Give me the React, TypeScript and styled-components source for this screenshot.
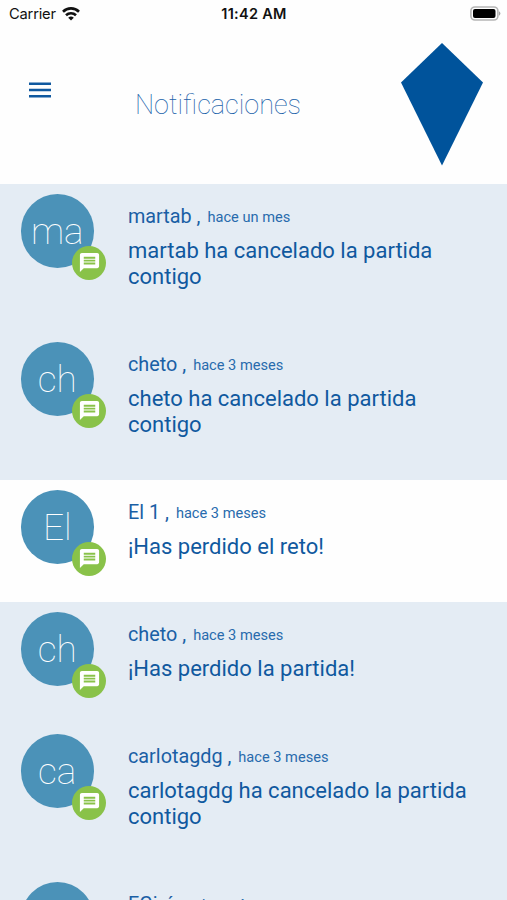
import React from 'react';
import styled, { createGlobalStyle } from 'styled-components';

const GlobalStyle = createGlobalStyle`
  * { box-sizing: border-box; }
  html, body { margin: 0; height: 900px; overflow: hidden; background: #fff; }
`;

const Screen = styled.div`
  width: 507px;
  height: 900px;
  overflow: hidden;
  display: flex;
  flex-direction: column;
  background: #fefefe;
  color: #1a5fa5;
  font-family: Roboto, sans-serif;
`;

const StatusBar = styled.div`
  flex: none;
  height: 28px;
  padding: 0 6px 0 9px;
  display: grid;
  grid-template-columns: 1fr auto 1fr;
  align-items: center;
  color: #111;
  font: 15px/28px Inter, sans-serif;
`;

const Carrier = styled.div`
  display: flex;
  align-items: center;
  gap: 6px;
  font-size: 14.7px;
  letter-spacing: -0.2px;
`;

const Clock = styled.div`
  margin-left: -2px;
  font-size: 14.5px;
  font-weight: 600;
  letter-spacing: 0.3px;
`;

const BatteryIcon = styled.svg`
  justify-self: end;
  margin-top: -2px;
`;

const Header = styled.header`
  flex: none;
  height: 156px;
  padding: 15px 24px 0 29px;
  display: grid;
  grid-template-columns: 106px 1fr auto;
  align-items: start;
`;

const MenuButton = styled.button`
  width: 22px;
  height: 16px;
  margin-top: 39px;
  padding: 0;
  border: 0;
  background: none;
  display: flex;
`;

const Title = styled.h1`
  margin: 45px 0 0;
  font-size: 27px;
  line-height: 34px;
  font-weight: 100;
  color: #1a62aa;
`;

const List = styled.div`
  flex: none;
`;

const Row = styled.article<{ $unread: boolean; $tall: boolean }>`
  height: ${(p) => (p.$tall ? 148 : 122)}px;
  padding: 10px 20px 0 20.5px;
  display: flex;
  gap: 34px;
  background: ${(p) => (p.$unread ? '#e4ecf4' : '#fefefe')};
`;

const Avatar = styled.div`
  position: relative;
  flex: none;
  width: 73.5px;
  height: 73.5px;
  border-radius: 50%;
  background: #4b92b8;
  color: #fff;
  font-size: 37px;
  font-weight: 100;
  line-height: 76px;
  text-align: center;
`;

const Badge = styled.div`
  position: absolute;
  left: 51.5px;
  top: 51.5px;
  width: 34px;
  height: 34px;
  border-radius: 50%;
  background: #89c249;
  display: flex;
  align-items: center;
  justify-content: center;
`;

const Content = styled.div`
  flex: 1;
  padding-top: 10px;
`;

const Meta = styled.div`
  display: flex;
  align-items: center;
  gap: 7px;
  height: 26px;
  font-size: 19.8px;
  line-height: 26px;
  white-space: pre;
`;

const Time = styled.time`
  font-size: 14.6px;
  line-height: 24px;
  color: #286bad;
`;

const Message = styled.p`
  margin: 8px 0 0;
  font-size: 22px;
  line-height: 26px;
  color: #10599f;
`;

const notifications = [
  { initials: 'ma', name: 'martab', time: 'hace un mes', message: 'martab ha cancelado la partida contigo', unread: true, tall: true },
  { initials: 'ch', name: 'cheto', time: 'hace 3 meses', message: 'cheto ha cancelado la partida contigo', unread: true, tall: true },
  { initials: 'El', name: 'El 1', time: 'hace 3 meses', message: '¡Has perdido el reto!', unread: false, tall: false },
  { initials: 'ch', name: 'cheto', time: 'hace 3 meses', message: '¡Has perdido la partida!', unread: true, tall: false },
  { initials: 'ca', name: 'carlotagdg', time: 'hace 3 meses', message: 'carlotagdg ha cancelado la partida contigo', unread: true, tall: true },
  { initials: 'EG', name: 'EGirón', time: 'hace 4 meses', message: '¡Has perdido la partida!', unread: true, tall: false },
];

export default function App() {
  return (
    <>
      <GlobalStyle />
      <Screen>
        <StatusBar>
          <Carrier>
            Carrier
            <svg width="18" height="14" viewBox="0 0 18 14" fill="none" stroke="#111" strokeWidth="2.6">
              <path d="M1 4.7a11.4 11.4 0 0 1 16 0" />
              <path d="M4 8.2a7.2 7.2 0 0 1 10 0" />
              <path d="M9 13.6 6.2 10.7a4.1 4.1 0 0 1 5.6 0Z" fill="#111" stroke="none" />
            </svg>
          </Carrier>
          <Clock>11:42 AM</Clock>
          <BatteryIcon width="31" height="15" viewBox="0 0 31 15">
            <rect x="0.9" y="1" width="27" height="13" rx="4" fill="#fff" stroke="#b5b5b5" strokeWidth="1.6" />
            <rect x="3" y="3" width="22.5" height="9" rx="2" fill="#000" />
            <path d="M29 5.2a2.6 2.6 0 0 1 0 4.6Z" fill="#a5a5a5" />
          </BatteryIcon>
        </StatusBar>
        <Header>
          <MenuButton aria-label="Menú">
            <svg width="22" height="16" viewBox="0 0 22 16" fill="#10599f">
              <path d="M0 .5h22v2.6H0zM0 6.7h22v2.6H0zM0 12.9h22v2.6H0z" />
            </svg>
          </MenuButton>
          <Title>Notificaciones</Title>
          <svg width="82" height="123" viewBox="0 0 82 123">
            <path d="M41 0 82 39.5 41 122.5 0 39.5Z" fill="#00539b" />
          </svg>
        </Header>
        <List>
          {notifications.map((n, i) => (
            <Row key={i} $unread={n.unread} $tall={n.tall}>
              <Avatar>
                {n.initials}
                <Badge>
                  <svg width="23" height="23" viewBox="0 0 24 24" fill="#fff">
                    <path d="M20 2H4c-1.1 0-1.99.9-1.99 2L2 22l4-4h14c1.1 0 2-.9 2-2V4c0-1.1-.9-2-2-2zm-2 12H6v-2h12v2zm0-3H6V9h12v2zm0-3H6V6h12v2z" />
                  </svg>
                </Badge>
              </Avatar>
              <Content>
                <Meta>
                  <span>{n.name} ,</span>
                  <Time>{n.time}</Time>
                </Meta>
                <Message>{n.message}</Message>
              </Content>
            </Row>
          ))}
        </List>
      </Screen>
    </>
  );
}
